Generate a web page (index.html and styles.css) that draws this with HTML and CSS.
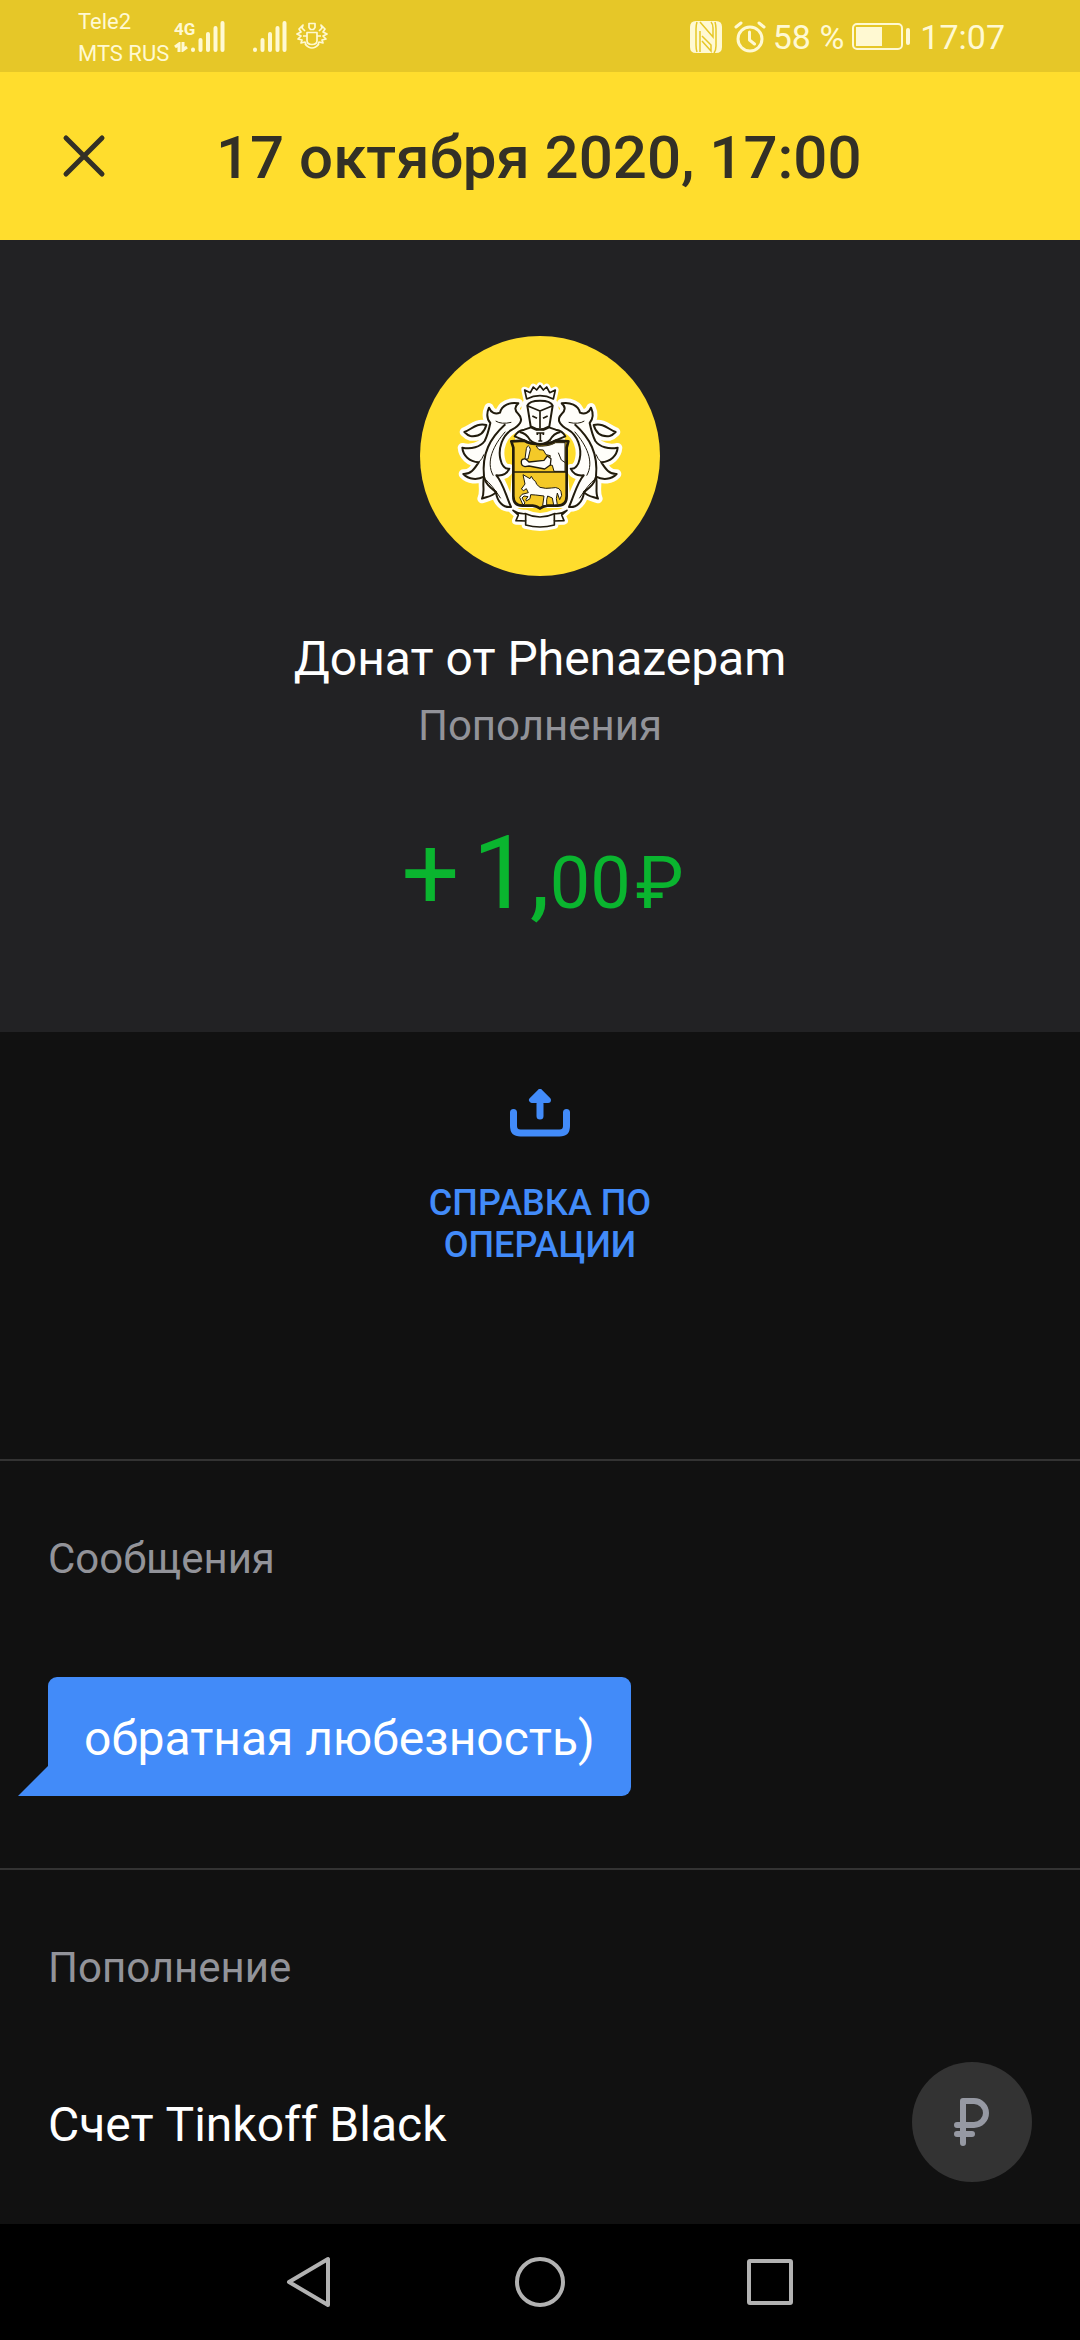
FILE: index.html
```html
<!DOCTYPE html>
<html lang="ru">
<head>
<meta charset="utf-8">
<meta name="viewport" content="width=device-width, initial-scale=1">
<title>17 октября 2020, 17:00</title>
<link rel="stylesheet" href="styles.css">
</head>
<body>
<div class="status">
  <div class="status-side">
    <div class="carriers"><span>Tele2</span><span>MTS RUS</span></div>
    <div class="signals">
      <div class="network">
        <span class="network-type">4G</span>
        <svg width="14" height="10" viewBox="0 0 14 10"><path d="M5 10V2L1 5M9 0v8l4-3" fill="none" stroke="currentColor" stroke-width="3"/></svg>
      </div>
      <svg class="bars" width="34" height="31" viewBox="0 0 34 31"><path d="M2 28.500v.5M9.500 19v10M17 13v16M24.500 7v22M31.500 2v27" fill="none" stroke="currentColor" stroke-width="4" stroke-linecap="round"/></svg>
      <svg class="bars bars-second" width="34" height="31" viewBox="0 0 34 31"><path d="M2 28.500v.5M9.500 19v10M17 13v16M24.500 7v22M31.500 2v27" fill="none" stroke="currentColor" stroke-width="4" stroke-linecap="round"/></svg>
      <svg class="bug" width="32" height="28" viewBox="0 0 32 28"><g fill="none" stroke="currentColor" stroke-width="1.700" stroke-linejoin="round"><path d="M13 1.500h6v4l-1.500 2h-3L13 5.500zM11 10.500h10v8q0 4-5 4t-5-4zM9 22q7 8 14 0"/><path d="M9 9 6 6l1-3-4 4 2 3-4 2 4 2-3 3 4 1-1 3 4-1 1 3M23 9l3-3-1-3 4 4-2 3 4 2-4 2 3 3-4 1 1 3-4-1-1 3M11 14H7M21 14h4"/></g></svg>
    </div>
  </div>
  <div class="status-side status-right">
    <svg width="32" height="32" viewBox="0 0 32 32"><path fill="currentColor" d="M6 0h20q6 0 6 6v20q0 6-6 6H6q-6 0-6-6V6q0-6 6-6z"/><path d="M7 1q-1 3-1 7v16q0 4 1 7M10 1l13 15V7q0-4-2-6M10 31V10M12 15l9 9v6l-9-10M25 1q1 3 1 7v17q0 4-2 7" fill="none" stroke="#e6c728" stroke-width="1.500"/></svg>
    <svg class="alarm" width="32" height="32" viewBox="0 0 32 32"><g fill="none" stroke="currentColor" stroke-width="3" stroke-linecap="round" stroke-linejoin="round"><circle cx="16" cy="18" r="12"/><path d="M2 6l5-4M30 6l-5-4M15.500 11v8l5 4"/></g></svg>
    <span class="status-text">58 %</span>
    <svg class="battery" width="58" height="28" viewBox="0 0 58 28"><rect x="1" y="1" width="49" height="25" rx="4" fill="none" stroke="currentColor" stroke-width="2"/><path d="M4 4h26v19H4z" fill="currentColor"/><path d="M56 7v13" stroke="currentColor" stroke-width="4" stroke-linecap="round"/></svg>
    <span class="status-text">17:07</span>
  </div>
</div>

<header class="appbar">
  <button class="close" type="button" aria-label="Закрыть">
    <svg width="44" height="44" viewBox="0 0 44 44"><path d="M4 4l36 36M40 4 4 40" stroke="currentColor" stroke-width="5" stroke-linecap="round"/></svg>
  </button>
  <h1 class="title">17 октября 2020, 17:00</h1>
</header>

<main class="content">
  <section class="hero">
    <svg class="avatar" viewBox="30 33 720 720" role="img" aria-label="Tinkoff">
      <defs>
        <path id="leaves" d="M303 546C280 549 261 530 258 501C248 514 232 515 216 521C226 500 216 482 222 455C202 466 176 464 160 447C184 448 194 430 206 412C178 410 159 392 157 368C184 374 211 366 224 348C232 332 238 308 241 294C230 281 229 266 237 248C243 264 256 269 270 263C275 241 300 230 325 235C312 245 314 257 325 267C344 286 327 302 306 314C277 330 264 371 271 402C275 421 285 433 298 431C290 448 274 453 259 451C279 473 287 510 303 546Z"/>
        <path id="sprig" d="M163 321C183 315 199 292 229 300C222 326 205 336 181 333Q173 331 163 321Z"/>
        <path id="crown" d="M350 222l-6-27 17 8 9-17 10 9 10-13 10 13 10-9 9 17 17-8-6 27q-40-20-80 0z"/>
        <path id="ribbon" d="M309 556q18 12 38 10 43 20 86 0 20 2 38-10l-16 14 7 17-29 1v12q-43 12-86 0v-12l-29-1 7-17z"/>
        <g id="foliage">
          <use href="#leaves"/>
          <use href="#sprig"/>
          <path d="M222 455C215 385 240 340 286 298M222 455C228 480 242 488 258 501" fill="none"/>
          <path d="M250 452C226 410 251 360 286 320M257 288Q274 299 304 292M206 412Q217 402 222 388M225 462Q246 480 272 520" fill="none" stroke-width="3"/>
        </g>
      </defs>
      <circle cx="390" cy="393" r="360" fill="#ffdd2d"/>
      <g fill="#fffefa" stroke="#fffefa" stroke-width="28" stroke-linejoin="round">
        <use href="#leaves"/>
        <use href="#sprig"/>
        <use href="#leaves" transform="translate(780 0) scale(-1 1)"/>
        <use href="#sprig" transform="translate(780 0) scale(-1 1)"/>
        <use href="#crown" stroke-width="20"/>
        <use href="#ribbon" stroke-width="24"/>
        <path d="M352 235h76l20 80 20 220H312l20-220z"/>
      </g>
      <g fill="#fffefa" stroke="#211b0c" stroke-width="6" stroke-linejoin="round">
        <use href="#foliage"/>
        <use href="#foliage" transform="translate(780 0) scale(-1 1)"/>
        <use href="#crown" stroke-width="5"/>
        <path d="M314 334q8-17 29-20l20-7q27 17 54 0l20 7q21 3 29 20l-31 13q-17 10-45 11-28-1-45-11z"/>
        <path d="M352 242q5-15 38-15t38 15l-10 62q-28 17-56 0z"/>
        <path d="M352 242l38 16 38-16M390 258v52M367 273l14 7M413 273l-14 7" fill="none" stroke-width="5"/>
        <path d="M304 349l38-2q18 11 48 11t48-11l37 2-5 19v145q0 29-27 29h-31q-15 2-22 9-7-7-22-9h-31q-27 0-27-29V368z" fill="#f4c928" stroke-width="8"/>
        <path d="M329 321q20 4 31 24 13 12 30 12t30-12q11-20 31-24-30-4-61-4t-61 4z" stroke="none"/>
        <path d="M329 321q20 4 31 24 13 12 30 12t30-12q11-20 31-24" fill="none"/>
        <path d="M378 363q37 3 59-10h28v86h-33l-5-18-13-2 7-27-13-3-8-14-13-1z" stroke-width="3"/>
        <path d="M347 402q-13-2-13 8-1 13 11 15l12-2 47 9 17-12 2-19-11-8-10 13-45 5z" stroke-width="4"/>
        <path d="M345 402l4-31q6-18 12 2l-7 29z" stroke-width="3"/>
        <path d="M445 383l9 22 12 8" fill="none" stroke-width="3"/>
        <path d="M312 441h156" fill="none" stroke-width="4"/>
        <path d="M339 449l21 12 4-7 6 10q9 5 10 14l10 9q17 5 34 2 30-7 31 22l-6 13-7-20-3 17 3 18-11 1-4-21-14-6-3 11v17l-12 1 4-29-25-3-15-1-2 12-11 7-1-5 6-8-12-2-6 6 9 15-6 6-10-23 7-9 19-5-6-12-8 6-7-5 11-15z" stroke-width="3"/>
        <path d="M379 324h24M382 322v8M400 322v8M391 323v25M385 348h12" fill="none" stroke-width="5"/>
        <use href="#ribbon" stroke-width="5"/>
        <path d="M347 566v22M433 566v22" stroke-width="5"/>
      </g>
    </svg>
    <h2 class="name">Донат от Phenazepam</h2>
    <p class="category">Пополнения</p>
    <p class="amount"><span class="sign">+</span>1,<span class="cents">00</span><span class="currency">₽</span></p>
  </section>

  <section class="actions">
    <button class="action" type="button">
      <svg width="60" height="48" viewBox="0 0 60 48"><path d="M3.500 23.500V37q0 7 7 7h39q7 0 7-7V23.500" fill="none" stroke="currentColor" stroke-width="7" stroke-linecap="round"/><path d="M30 15v12" stroke="currentColor" stroke-width="7" stroke-linecap="round"/><path d="M30 3 22 11h16z" fill="currentColor" stroke="currentColor" stroke-width="6" stroke-linejoin="round"/></svg>
      <span class="action-label">СПРАВКА ПО ОПЕРАЦИИ</span>
    </button>
  </section>

  <section class="block messages">
    <h3 class="heading">Сообщения</h3>
    <p class="bubble">обратная любезность)</p>
  </section>

  <section class="block deposit">
    <h3 class="heading">Пополнение</h3>
    <div class="account">
      <span class="account-name">Счет Tinkoff Black</span>
      <span class="account-icon">
        <svg width="36" height="48" viewBox="0 0 36 48"><path d="M9 45V3h11a12 12 0 0 1 0 24H3M3 36h15" fill="none" stroke="currentColor" stroke-width="6" stroke-linecap="round" stroke-linejoin="round"/></svg>
      </span>
    </div>
  </section>
</main>

<nav class="navbar">
  <button class="nav-button" type="button" aria-label="Назад"><svg width="52" height="52" viewBox="0 0 52 52"><path d="M44 3v46L5 26z"/></svg></button>
  <button class="nav-button" type="button" aria-label="Домой"><svg width="52" height="52" viewBox="0 0 52 52"><circle cx="26" cy="26" r="23"/></svg></button>
  <button class="nav-button" type="button" aria-label="Недавние"><svg width="52" height="52" viewBox="0 0 52 52"><rect x="5" y="5" width="42" height="42" rx="1"/></svg></button>
</nav>
</body>
</html>
```
FILE: styles.css
```css
* {
  box-sizing: border-box;
}

body {
  display: flex;
  flex-direction: column;
  min-height: 100vh;
  margin: 0;
  background: #111;
  color: #fff;
  font-family: Roboto, "Noto Sans", sans-serif;
}

h1, h2, h3, p {
  margin: 0;
  font-weight: 400;
}

button {
  padding: 0;
  border: 0;
  background: none;
  color: inherit;
  font: inherit;
}

svg {
  display: block;
  flex: none;
}

.status {
  display: flex;
  justify-content: space-between;
  height: 72px;
  padding: 0 75px 0 78px;
  background: #e6c728;
  color: #fff9d2;
}

.status-side {
  display: flex;
  align-items: center;
}

.carriers {
  display: flex;
  flex-direction: column;
  width: 96px;
  padding-top: 3px;
  font-size: 22px;
  line-height: 32px;
  white-space: nowrap;
}

.signals {
  display: flex;
  align-items: center;
}

.network {
  display: flex;
  flex-direction: column;
  gap: 5px;
  width: 17px;
}

.network-type {
  font-family: "Liberation Sans Narrow", Roboto, sans-serif;
  font-size: 17px;
  font-weight: 700;
  line-height: 16px;
}

.bars-second {
  margin: 0 9px 0 28px;
}

.alarm {
  margin: 0 7px 0 12px;
}

.status-right {
  padding-top: 1px;
}

.status-text {
  font-size: 34px;
  line-height: 40px;
  white-space: nowrap;
}

.battery {
  margin: 0 10px 0 8px;
}

.appbar {
  display: flex;
  align-items: center;
  height: 168px;
  padding: 0 62px;
  background: #ffdd2d;
  color: #333026;
}

.close {
  width: 154px;
}

.title {
  padding-top: 4px;
  font-size: 60px;
  font-weight: 500;
  line-height: 72px;
}

.content {
  flex: 1;
}

.hero {
  display: flex;
  flex-direction: column;
  align-items: center;
  padding: 96px 48px 99px;
  background: #222224;
}

.avatar {
  width: 240px;
  height: 240px;
}

.name {
  margin-top: 55px;
  font-size: 48px;
  line-height: 56px;
}

.category {
  margin-top: 14px;
  color: #929399;
  font-size: 42px;
  line-height: 50px;
}

.amount {
  margin-top: 62px;
  color: #0ab52f;
  font-size: 102px;
  line-height: 120px;
}

.sign {
  margin: 0 13px 0 5px;
}

.cents,
.currency {
  font-size: 72px;
  line-height: 72px;
}

.currency {
  margin-left: 5px;
}

.actions {
  display: flex;
  justify-content: center;
  padding: 57px 48px 193px;
}

.action {
  display: flex;
  flex-direction: column;
  align-items: center;
  gap: 45px;
  width: 260px;
  color: #428bf9;
}

.action-label {
  font-size: 36px;
  font-weight: 500;
  line-height: 42px;
}

.block {
  padding: 73px 48px 0;
  border-top: 2px solid #333;
}

.heading {
  color: #929399;
  font-size: 42px;
  line-height: 50px;
}

.messages {
  padding-bottom: 72px;
}

.bubble {
  position: relative;
  width: fit-content;
  margin-top: 93px;
  padding: 34px 36px 29px;
  border-radius: 9px 9px 9px 0;
  background: #428bf9;
  font-size: 48px;
  line-height: 56px;
}

.bubble::before {
  content: "";
  position: absolute;
  right: 100%;
  bottom: 0;
  width: 30px;
  height: 30px;
  background: #428bf9;
  clip-path: polygon(100% 0, 100% 100%, 0 100%);
}

.deposit {
  padding-bottom: 42px;
}

.account {
  display: flex;
  align-items: center;
  justify-content: space-between;
  margin-top: 69px;
}

.account-name {
  padding-top: 6px;
  font-size: 48px;
  line-height: 56px;
}

.account-icon {
  display: grid;
  place-items: center;
  width: 120px;
  height: 120px;
  border-radius: 50%;
  background: #333;
  color: #9699a3;
}

.navbar {
  display: flex;
  justify-content: center;
  gap: 178px;
  height: 116px;
  background: #000;
}

.nav-button svg {
  fill: none;
  stroke: #b2b2b2;
  stroke-width: 4;
  stroke-linejoin: round;
}
```
